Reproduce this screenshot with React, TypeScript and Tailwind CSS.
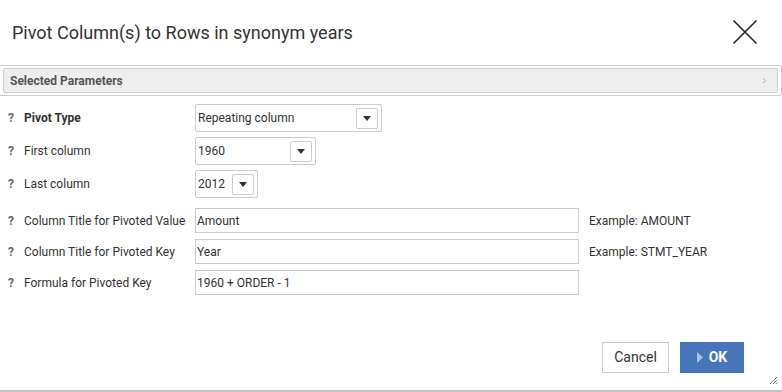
import React from 'react';

const Caret = () => (
  <span className="w-[22px] h-[21px] border border-[#ccc] rounded-[2px] bg-white flex items-center justify-center">
    <svg width="8" height="5" viewBox="0 0 8 5">
      <path d="M0 0h8L4 5z" fill="#333" />
    </svg>
  </span>
);

const Select = ({ value, width }: { value: string; width: string }) => (
  <div className={`${width} h-[28px] border border-[#ccc] rounded-[2px] bg-white flex items-center justify-between pl-[2px] pr-[3px] text-[12px] text-[#333]`}>
    <span>{value}</span>
    <Caret />
  </div>
);

const Help = () => <span className="w-[16px] text-[12px] font-bold text-[#666]">?</span>;

const Row = ({ label, bold, children }: { label: string; bold?: boolean; children: React.ReactNode }) => (
  <div className="flex items-center">
    <div className="w-[195px] pl-[8px] flex items-center">
      <Help />
      <span className={`text-[12px] text-[#333] ${bold ? 'font-bold' : ''}`}>{label}</span>
    </div>
    {children}
  </div>
);

const TextInput = ({ value, hint }: { value: string; hint?: string }) => (
  <>
    <div className="w-[384px] h-[25px] border border-[#ccc] flex items-center pl-[1px] text-[12px] text-[#333]">{value}</div>
    {hint && <span className="ml-[10px] text-[12px] text-[#333]">{hint}</span>}
  </>
);

export default function App() {
  return (
    <div className="w-[782px] h-[392px] bg-white font-['Roboto',sans-serif] flex flex-col border-b-2 border-[#c4c4c4] relative">
      <div className="h-[65px] flex items-center justify-between pl-[12px] pr-[24px] pb-[1px]">
        <h1 className="text-[18px] text-[#333]">Pivot Column(s) to Rows in synonym years</h1>
        <svg width="26" height="26" viewBox="0 0 26 26">
          <path d="M1.5 1.5l23 23M24.5 1.5l-23 23" stroke="#222" strokeWidth="1.6" />
        </svg>
      </div>

      <div className="border-y border-r border-[#ccc] rounded-r-[3px] py-[2px] pl-[3px] pr-[3px]">
        <div className="h-[25px] bg-[#eee] border border-[#ccc] rounded-[2px] flex items-center justify-between pl-[6px] pr-[10px]">
          <span className="text-[12px] font-bold text-[#555]">Selected Parameters</span>
          <svg width="5" height="7" viewBox="0 0 5 7">
            <path d="M1 1l2.5 2.5L1 6" stroke="#aaa" fill="none" strokeWidth="1" />
          </svg>
        </div>
      </div>

      <div className="flex flex-col pt-[8px] gap-[5px]">
        <Row label="Pivot Type" bold>
          <Select value="Repeating column" width="w-[187px]" />
        </Row>
        <Row label="First column">
          <Select value="1960" width="w-[121px]" />
        </Row>
        <Row label="Last column">
          <Select value="2012" width="w-[63px]" />
        </Row>
      </div>

      <div className="flex flex-col pt-[10px] gap-[6px]">
        <Row label="Column Title for Pivoted Value">
          <TextInput value="Amount" hint="Example: AMOUNT" />
        </Row>
        <Row label="Column Title for Pivoted Key">
          <TextInput value="Year" hint="Example: STMT_YEAR" />
        </Row>
        <Row label="Formula for Pivoted Key">
          <TextInput value="1960 + ORDER - 1" />
        </Row>
      </div>

      <div className="flex justify-end gap-[11px] pr-[38px] mt-[47px]">
        <button className="w-[67px] h-[31px] border border-[#ccc] bg-white text-[14px] text-[#333]">Cancel</button>
        <button className="w-[64px] h-[31px] bg-[#4676b9] text-white text-[14px] font-bold flex items-center justify-center gap-[6px]">
          <svg width="6" height="11" viewBox="0 0 6 11">
            <path d="M0 0l6 5.5L0 11z" fill="#a9c3e6" />
          </svg>
          OK
        </button>
      </div>

      <svg className="absolute right-[4px] bottom-[5px]" width="9" height="9" viewBox="0 0 9 9">
        <path d="M8 1L1 8M8 4L4 8M8 7L7 8" stroke="#777" strokeWidth="1" />
      </svg>
    </div>
  );
}
